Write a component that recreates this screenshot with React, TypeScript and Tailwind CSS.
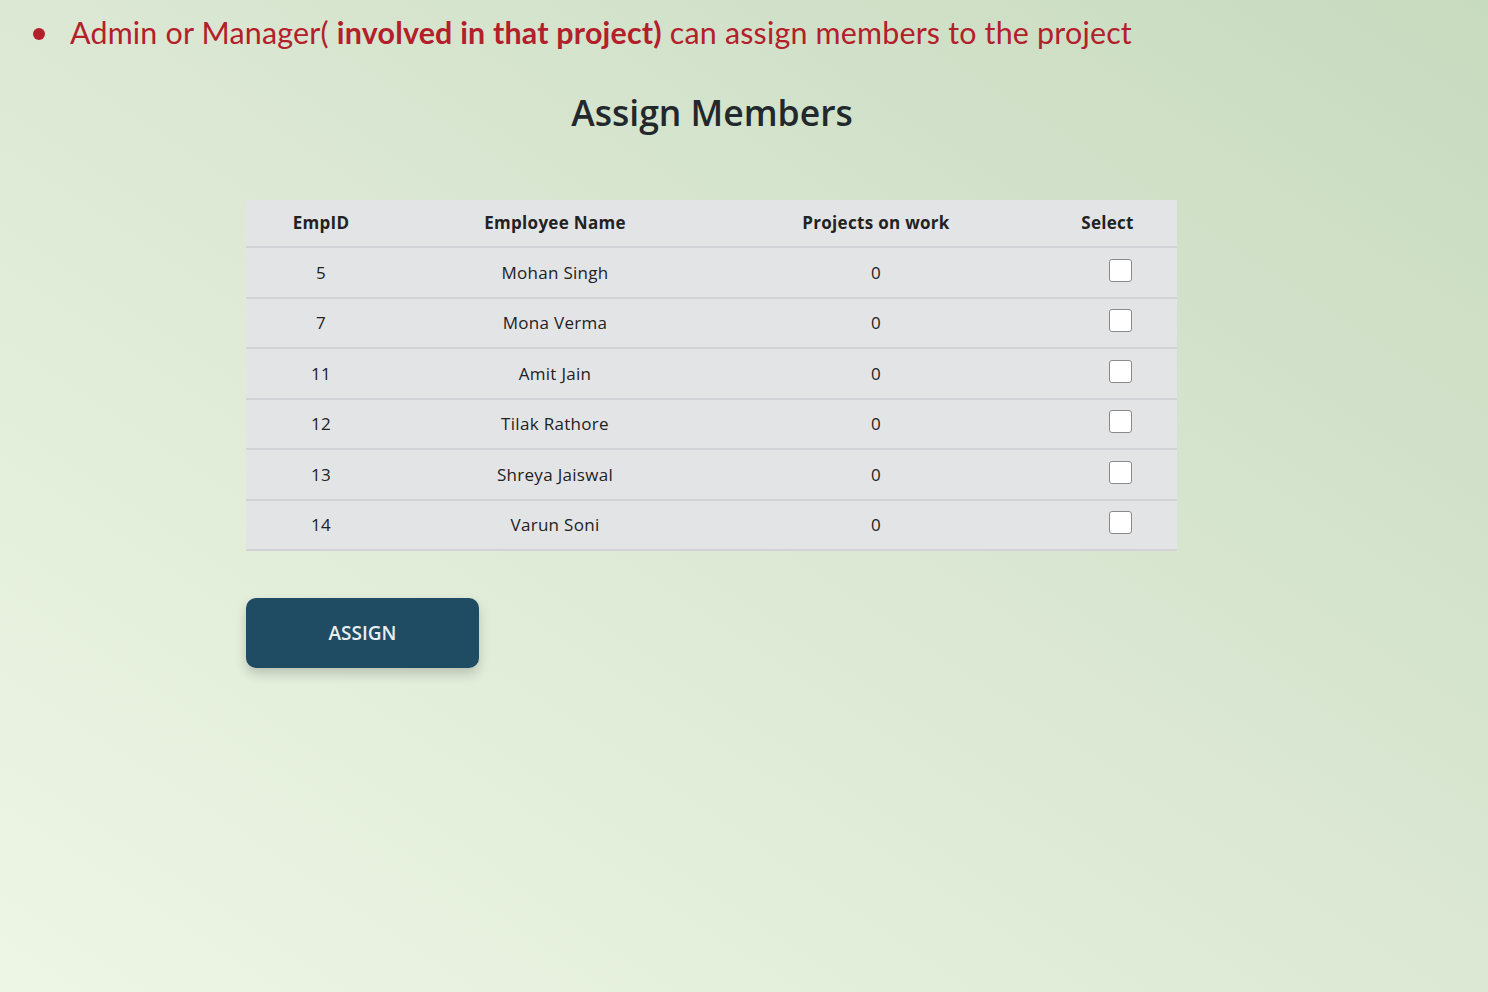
import { useState } from 'react';

const employees = [
  { id: 5, name: 'Mohan Singh', projects: 0 },
  { id: 7, name: 'Mona Verma', projects: 0 },
  { id: 11, name: 'Amit Jain', projects: 0 },
  { id: 12, name: 'Tilak Rathore', projects: 0 },
  { id: 13, name: 'Shreya Jaiswal', projects: 0 },
  { id: 14, name: 'Varun Soni', projects: 0 },
];

export default function App() {
  const [selected, setSelected] = useState<number[]>([]);

  const toggle = (id: number) =>
    setSelected(prev => (prev.includes(id) ? prev.filter(x => x !== id) : [...prev, id]));

  return (
    <div className="w-[1488px] h-[992px] overflow-hidden bg-gradient-to-tr from-[#edf6e4] via-[#dce8d4] to-[#c7dbbf] font-['Open_Sans',sans-serif]">
      {/* note */}
      <div className="flex items-center pt-[9px] pl-[33px] h-[56px] text-[#b3202a] text-[30.4px] leading-none font-['Lato',sans-serif] tracking-[0.2px]">
        <span className="w-[12px] h-[12px] rounded-full bg-[#b3202a] mr-[25px] mt-[2px]" />
        <span>
          Admin or Manager( <b className="font-bold">involved in that project)</b> can assign members to the project
        </span>
      </div>

      <h1 className="mt-[34px] text-center pr-[64px] text-[35.5px] leading-[44px] font-semibold text-[#23282c]">
        Assign Members
      </h1>

      <div className="ml-[246px] mt-[66px] w-[931px]">
        <table className="w-full border-collapse bg-[#e2e4e6] text-[17px] tracking-[0.3px] text-[#222]">
          <thead>
            <tr className="h-[47px] border-b-2 border-[#d2d3d6]">
              <th className="w-[150px] font-bold">EmpID</th>
              <th className="w-[318px] font-bold">Employee Name</th>
              <th className="w-[324px] font-bold">Projects on work</th>
              <th className="font-bold">Select</th>
            </tr>
          </thead>
          <tbody>
            {employees.map(e => (
              <tr key={e.id} className="h-[50.5px] border-b-2 border-[#d2d3d6]">
                <td className="text-center">{e.id}</td>
                <td className="text-center">{e.name}</td>
                <td className="text-center">{e.projects}</td>
                <td className="pl-[71px]">
                  <input
                    type="checkbox"
                    checked={selected.includes(e.id)}
                    onChange={() => toggle(e.id)}
                    className="appearance-none w-[23px] h-[23px] rounded-[3px] bg-white border border-[#8a8a8a] align-middle mt-[-7px] checked:bg-[#1f4b63]"
                  />
                </td>
              </tr>
            ))}
          </tbody>
        </table>

        <button className="mt-[47px] w-[233px] h-[70px] rounded-[10px] bg-[#1f4b63] text-[#e9eef0] text-[19px] font-semibold shadow-[0_6px_12px_rgba(0,0,0,0.18)]">
          ASSIGN
        </button>
      </div>
    </div>
  );
}
